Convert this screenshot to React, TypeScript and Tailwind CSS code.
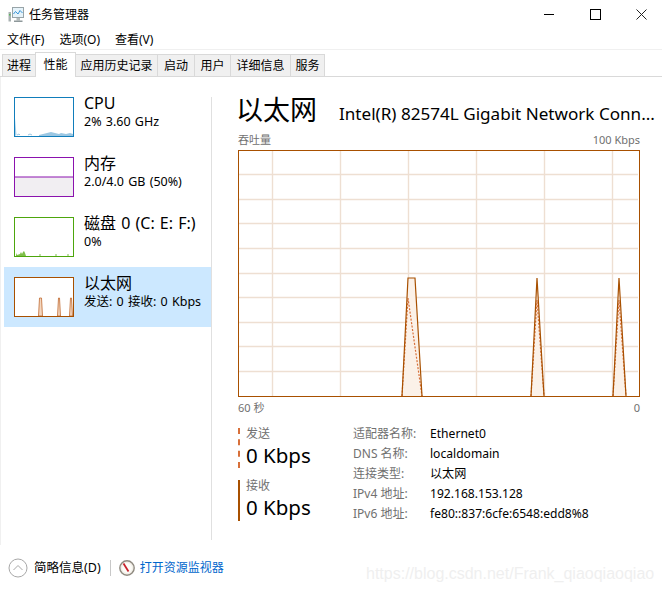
import React from 'react';

const sans = "font-['Noto_Sans','Noto_Sans_CJK_SC',sans-serif]";

const tabs = [
  { label: '进程', w: 'w-[34px]' },
  { label: '性能', w: 'w-[41px]', active: true },
  { label: '应用历史记录', w: 'w-[83px]' },
  { label: '启动', w: 'w-[38px]' },
  { label: '用户', w: 'w-[37px]' },
  { label: '详细信息', w: 'w-[61px]' },
  { label: '服务', w: 'w-[35px]' },
];

const details = [
  ['适配器名称:', 'Ethernet0'],
  ['DNS 名称:', 'localdomain'],
  ['连接类型:', '以太网'],
  ['IPv4 地址:', '192.168.153.128'],
  ['IPv6 地址:', 'fe80::837:6cfe:6548:edd8%8'],
];

const AppIcon = () => (
  <svg width="16" height="16" viewBox="0 0 16 16" className="shrink-0">
    <rect x="0.5" y="5" width="2.5" height="9.5" fill="#a9b2b2" />
    <rect x="1" y="7" width="1.5" height="1.5" fill="#58b858" />
    <rect x="4.5" y="0.5" width="11" height="10" fill="#e6f3fa" stroke="#98a4a8" />
    <path d="M5.5 7 L7.5 4.5 L10 7 L12 3.5 L14.5 6" fill="none" stroke="#3a96d8" strokeWidth="1" />
    <rect x="8.5" y="11" width="3.5" height="2.5" fill="#b4bcbc" />
    <rect x="6" y="13.5" width="8.5" height="1.5" fill="#8e989a" />
  </svg>
);

const Thumb = ({ color, children }: { color: string; children?: React.ReactNode }) => (
  <svg width="60" height="40" viewBox="0 0 60 40" className="shrink-0">
    {children}
    <rect x="0.5" y="0.5" width="59" height="39" fill="none" stroke={color} />
  </svg>
);

const SideItem = ({
  title,
  sub,
  selected,
  children,
}: {
  title: string;
  sub: string;
  selected?: boolean;
  children: React.ReactNode;
}) => (
  <div className={`flex h-[60px] pl-[10px] pt-[10px] gap-[10px] ${selected ? 'bg-[#cce8ff]' : ''}`}>
    {children}
    <div className="-mt-[5px]">
      <div className="text-[16px] leading-[22px] text-black whitespace-nowrap [word-spacing:1px]">{title}</div>
      <div className="text-[12.5px] leading-[16px] text-black whitespace-nowrap [word-spacing:1px]">{sub}</div>
    </div>
  </div>
);

const Spike = ({ d, fillD, dash }: { d: string; fillD: string; dash: string }) => (
  <>
    <path d={fillD} fill="#fbf1e8" />
    <path d={dash} fill="none" stroke="#d8703a" strokeWidth="1.2" strokeDasharray="2 1.5" />
    <path d={d} fill="none" stroke="#a85000" strokeWidth="1.2" />
  </>
);

const NetGraph = () => {
  const vs = [34, 102, 170, 238, 306, 374];
  const hs = [24.5, 49.5, 73.5, 98.5, 123.5, 147.5, 172.5, 196.5, 221.5];
  return (
    <svg width="402" height="247" viewBox="0 0 402 247" className="block">
      {vs.map(x => (
        <line key={x} x1={x + 0.5} y1="1" x2={x + 0.5} y2="246" stroke="#eedfd2" strokeWidth="1.4" />
      ))}
      {hs.map(y => (
        <line key={y} x1="1" y1={y} x2="400" y2={y} stroke="#eedfd2" strokeWidth="1.4" />
      ))}
      <Spike fillD="M164 246 L170 128 L177 128 L184 246 Z" d="M164 246 L170 128 L177 128 L184 246" dash="M164 246 L170 148 L184 246" />
      <Spike fillD="M293 246 L299 128 L306 246 Z" d="M293 246 L299 128 L306 246" dash="M293 246 L299 150 L306 246" />
      <Spike fillD="M375 246 L381 128 L388 246 Z" d="M375 246 L381 128 L388 246" dash="M375 246 L381 150 L388 246" />
      <rect x="0.5" y="0.5" width="401" height="246" fill="none" stroke="#a85000" />
    </svg>
  );
};

export default function App() {
  return (
    <div className={`relative w-[662px] h-[592px] bg-white flex flex-col overflow-hidden ${sans}`}>
      <div className="h-[30px] flex items-center shrink-0">
        <div className="ml-[8px]"><AppIcon /></div>
        <span className="ml-[5px] text-[12px] text-black">任务管理器</span>
        <div className="ml-auto flex items-start h-[30px] -mr-[2px]">
          <div className="w-[46px] h-[28px] flex items-center justify-center">
            <div className="w-[10px] h-px bg-black" />
          </div>
          <div className="w-[46px] h-[28px] flex items-center justify-center">
            <div className="w-[11px] h-[11px] border border-black" />
          </div>
          <div className="w-[46px] h-[28px] flex items-center justify-center">
            <svg width="11" height="11" viewBox="0 0 11 11">
              <path d="M0.5 0.5 L10.5 10.5 M10.5 0.5 L0.5 10.5" stroke="#222" strokeWidth="1" />
            </svg>
          </div>
        </div>
      </div>

      <div className="h-[20px] flex items-center gap-[15px] pl-[7px] text-[12px] text-black border-b border-[#f0f0f0] shrink-0">
        <span>文件(F)</span>
        <span>选项(O)</span>
        <span>查看(V)</span>
      </div>

      <div className="h-[27px] flex items-end pl-[2px] border-b border-[#d9d9d9] shrink-0 pt-[2px]">
        {tabs.map(t => (
          <div
            key={t.label}
            className={`flex items-center justify-center text-[12px] text-black border border-[#d9d9d9] -mr-px ${t.w} ${
              t.active ? 'h-[25px] bg-white border-b-0 relative z-10 -mb-px' : 'h-[22px] bg-[#f0f0f0] border-b-0'
            }`}
          >
            {t.label}
          </div>
        ))}
      </div>

      <div className="flex flex-1 min-h-0 pt-[10px] pl-[3px] pb-[5px] border-l border-[#f0f0f0]">
        <div className="w-[207px] shrink-0">
          <SideItem title="CPU" sub="2%  3.60 GHz">
            <Thumb color="#117dbb">
              <path d="M1 39 L1 21 L2.5 38 L1 39 Z" fill="#a9d0e8" />
              <path d="M25 38 L29 37 L33 36 L37 35 L41 36 L45 37 L47 36 L52 37 L56 36 L59 37 L59 39 L25 39 Z" fill="#9cc7e2" />
              <path d="M3 38 L5 37 L6 38 M14 38 L16 37 L18 38" fill="none" stroke="#9cc7e2" />
            </Thumb>
          </SideItem>
          <SideItem title="内存" sub="2.0/4.0 GB (50%)">
            <Thumb color="#8b12ae">
              <rect x="1" y="20" width="58" height="19" fill="#f1eef2" />
              <line x1="0" y1="20" x2="60" y2="20" stroke="#8b12ae" />
            </Thumb>
          </SideItem>
          <SideItem title="磁盘 0 (C: E: F:)" sub="0%">
            <Thumb color="#4da60c">
              <path d="M2 39 L2 36 L3 38 L6 37 L7 35 L8 37 L9 35 L10 34 L11 36 L12 39 Z" fill="#7fbf4a" />
              <path d="M25 38 L27 38 M41 38 L43 38 M53 38 L55 38" stroke="#7fbf4a" />
            </Thumb>
          </SideItem>
          <SideItem title="以太网" sub="发送: 0 接收: 0 Kbps" selected>
            <Thumb color="#a85000">
              <rect x="1" y="1" width="58" height="38" fill="#ffffff" />
              <path d="M24.5 39 L25.5 21 L27.5 21 L28.5 39 Z M43.5 39 L44.5 21 L45.5 21 L46.5 39 Z M55.5 39 L56.5 21 L57.5 21 L58.5 39 Z" fill="#f3d7c0" stroke="#c06a30" strokeWidth="0.8" />
            </Thumb>
          </SideItem>
        </div>

        <div className="w-px mt-[10px] bg-[#e0e0e0] shrink-0" />

        <div className="flex-1 min-w-0 pl-[26px] pr-[22px] -mt-[4px] pt-[10px]">
          <div className="flex items-baseline h-[34px] -ml-[2px]">
            <span className="text-[27px] leading-[34px] text-black w-[103px] shrink-0">以太网</span>
            <span className="text-[17.1px] text-black whitespace-nowrap">Intel(R) 82574L Gigabit Network Conn...</span>
          </div>
          <div className="flex justify-between text-[11px] leading-[16px] text-[#707070] mt-[5px] mb-[2px]">
            <span>吞吐量</span>
            <span>100 Kbps</span>
          </div>
          <NetGraph />
          <div className="flex justify-between text-[11px] leading-[16px] text-[#707070] mt-[3px]">
            <span>60 秒</span>
            <span>0</span>
          </div>

          <div className="flex mt-[11px]">
            <div className="w-[115px] shrink-0">
              <div className="border-l-2 border-dashed border-[#d8703a] pl-[6px] h-[40px] mt-[1px]">
                <div className="text-[12px] leading-[12px] text-[#707070]">发送</div>
                <div className="text-[20.5px] leading-[30px] text-black">0 Kbps</div>
              </div>
              <div className="border-l-2 border-[#a85000] pl-[6px] h-[41px] mt-[12px]">
                <div className="text-[12px] leading-[12px] text-[#707070]">接收</div>
                <div className="text-[20.5px] leading-[30px] text-black">0 Kbps</div>
              </div>
            </div>
            <div className="-mt-[3px]">
              {details.map(([k, v]) => (
                <div key={k} className="flex h-[20px] items-center text-[12px] whitespace-nowrap">
                  <span className="w-[77px] text-[#707070]">{k}</span>
                  <span className="text-black text-[12.1px]">{v}</span>
                </div>
              ))}
            </div>
          </div>
        </div>
      </div>

      <div className="h-[47px] flex items-center pl-[8px] pb-[1px] shrink-0 text-[12px]">
        <svg width="20" height="20" viewBox="0 0 20 20" className="shrink-0">
          <circle cx="10" cy="10" r="9" fill="none" stroke="#a8a8a8" />
          <path d="M5.5 12 L10 7.5 L14.5 12" fill="none" stroke="#a8a8a8" />
        </svg>
        <span className="ml-[6px] text-[12.5px] text-black">简略信息(D)</span>
        <div className="ml-[9px] w-px h-[16px] bg-[#c8c8c8]" />
        <svg width="16" height="16" viewBox="0 0 16 16" className="ml-[8px] shrink-0">
          <circle cx="8" cy="8" r="7.2" fill="#f2efe8" stroke="#8f8a80" strokeWidth="1.4" />
          <circle cx="8" cy="8" r="5" fill="#fdfcf8" />
          <path d="M4.5 3.5 L9.5 11.5" stroke="#c8202a" strokeWidth="1.8" />
        </svg>
        <span className="ml-[5px] text-[#0066cc]">打开资源监视器</span>
      </div>

      <div className="absolute left-[366px] top-[563px] text-[16px] leading-[22px] text-[#efefef] font-['Liberation_Sans',sans-serif] whitespace-nowrap">
        https://blog.csdn.net/Frank_qiaoqiaoqiao
      </div>
    </div>
  );
}
